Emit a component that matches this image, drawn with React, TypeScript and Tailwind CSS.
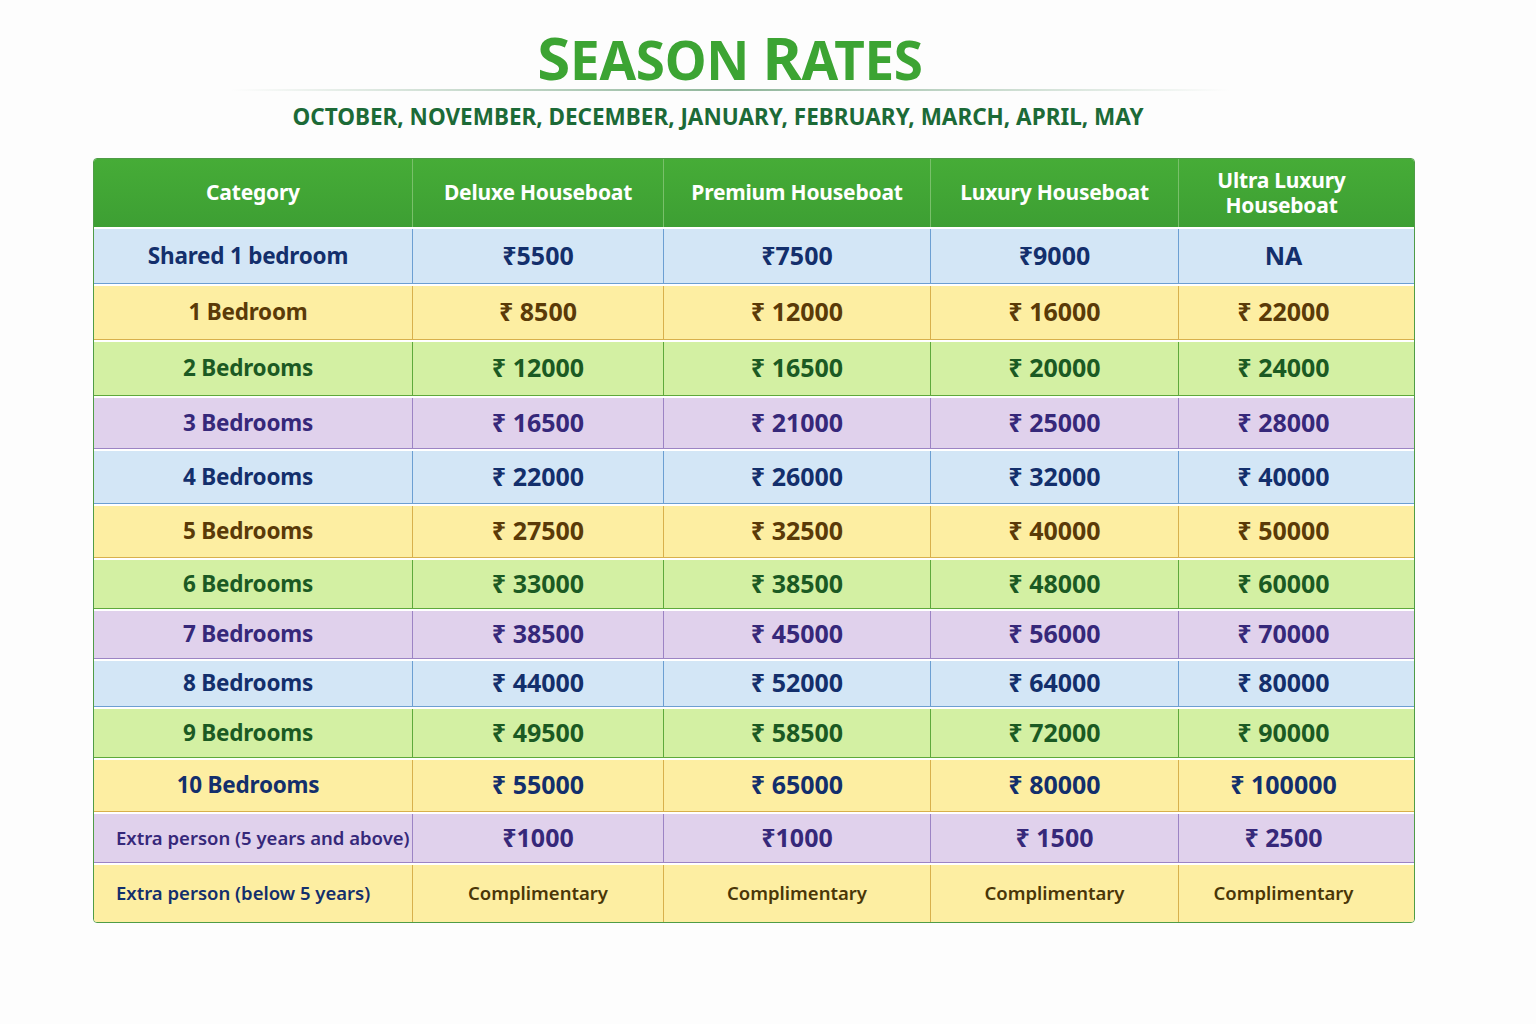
type Tone = "blue" | "yellow" | "green" | "purple";

const tones: Record<Tone, { row: string; cell: string; text: string }> = {
  blue: { row: "bg-[#d3e6f6] border-[#6c9fd2]", cell: "border-[#6c9fd2]", text: "text-[#132f6c]" },
  yellow: { row: "bg-[#fdeea2] border-[#d8b04c]", cell: "border-[#d8b04c]", text: "text-[#5a3a08]" },
  green: { row: "bg-[#d3f0a3] border-[#5ea93b]", cell: "border-[#5ea93b]", text: "text-[#1b5a23]" },
  purple: { row: "bg-[#e0d1ec] border-[#9c84c4]", cell: "border-[#9c84c4]", text: "text-[#36287a]" },
};

const rows: { cat: string; vals: string[]; tone: Tone; h: string; catText?: string }[] = [
  { cat: "Shared 1 bedroom", vals: ["₹5500", "₹7500", "₹9000", "NA"], tone: "blue", h: "h-[55px]" },
  { cat: "1 Bedroom", vals: ["₹ 8500", "₹ 12000", "₹ 16000", "₹ 22000"], tone: "yellow", h: "h-[54px]" },
  { cat: "2 Bedrooms", vals: ["₹ 12000", "₹ 16500", "₹ 20000", "₹ 24000"], tone: "green", h: "h-[54px]" },
  { cat: "3 Bedrooms", vals: ["₹ 16500", "₹ 21000", "₹ 25000", "₹ 28000"], tone: "purple", h: "h-[51px]" },
  { cat: "4 Bedrooms", vals: ["₹ 22000", "₹ 26000", "₹ 32000", "₹ 40000"], tone: "blue", h: "h-[53px]" },
  { cat: "5 Bedrooms", vals: ["₹ 27500", "₹ 32500", "₹ 40000", "₹ 50000"], tone: "yellow", h: "h-[52px]" },
  { cat: "6 Bedrooms", vals: ["₹ 33000", "₹ 38500", "₹ 48000", "₹ 60000"], tone: "green", h: "h-[49px]" },
  { cat: "7 Bedrooms", vals: ["₹ 38500", "₹ 45000", "₹ 56000", "₹ 70000"], tone: "purple", h: "h-[48px]" },
  { cat: "8 Bedrooms", vals: ["₹ 44000", "₹ 52000", "₹ 64000", "₹ 80000"], tone: "blue", h: "h-[46px]" },
  { cat: "9 Bedrooms", vals: ["₹ 49500", "₹ 58500", "₹ 72000", "₹ 90000"], tone: "green", h: "h-[49px]" },
  {
    cat: "10 Bedrooms",
    vals: ["₹ 55000", "₹ 65000", "₹ 80000", "₹ 100000"],
    tone: "yellow",
    h: "h-[52px]",
    catText: "text-[#132f6c]",
  },
];

const cols = "grid grid-cols-[318px_251px_267px_248px_238px]";

export default function App() {
  return (
    <main
      className="min-h-screen w-full bg-[#fdfdfd]"
      style={{ fontFamily: '"Noto Sans", "Open Sans", sans-serif' }}
    >
      <div className="ml-[230px] flex w-[1000px] flex-col items-center pt-[27px]">
        <h1 className="leading-none font-bold tracking-[-0.02em] text-[#3ca433]">
          <span className="text-[60px]">S</span>
          <span className="text-[53px]">EASON </span>
          <span className="text-[60px]">R</span>
          <span className="text-[53px]">ATES</span>
        </h1>
        <div className="mt-[2px] h-[2px] w-full bg-gradient-to-r from-transparent via-[#8fb59a] to-transparent" />
        <p className="mt-[15px] pr-[24px] text-[22.5px] leading-none font-bold text-[#1c6a37]">
          OCTOBER, NOVEMBER, DECEMBER, JANUARY, FEBRUARY, MARCH, APRIL, MAY
        </p>
      </div>

      <div className="mt-[29px] ml-[93px] flex w-[1322px] flex-col gap-[2px] overflow-hidden rounded-[4px] border border-[#4f9c47] bg-white">
        <div className={`${cols} h-[68px] bg-gradient-to-b from-[#46ac37] to-[#3d9f33] text-[21px] leading-[23px] font-bold tracking-[-0.01em] text-white`}>
          <div className="flex items-center justify-center">Category</div>
          <div className="flex items-center justify-center border-l border-[#79c06a]">Deluxe Houseboat</div>
          <div className="flex items-center justify-center border-l border-[#79c06a]">Premium Houseboat</div>
          <div className="flex items-center justify-center border-l border-[#79c06a]">Luxury Houseboat</div>
          <div className="flex flex-col items-center justify-center border-l border-[#79c06a] pr-[32px] text-center leading-[25px]">
            <span>Ultra Luxury</span>
            <span>Houseboat</span>
          </div>
        </div>

        {rows.map((r) => {
          const t = tones[r.tone];
          return (
            <div key={r.cat} className={`${cols} ${r.h} border-b ${t.row} text-[25px] font-bold ${t.text}`}>
              <div className={`flex items-center justify-center pr-[10px] text-[22.5px] tracking-[-0.01em] ${r.catText ?? ""}`}>
                {r.cat}
              </div>
              {r.vals.map((v, i) => (
                <div
                  key={i}
                  className={`flex items-center justify-center border-l ${t.cell} ${i === 3 ? "pr-[28px]" : ""} ${r.catText ?? ""}`}
                >
                  {v}
                </div>
              ))}
            </div>
          );
        })}

        <div className={`${cols} h-[49px] border-b ${tones.purple.row} font-bold ${tones.purple.text}`}>
          <div className="flex items-center pl-[22px] text-[18.5px] font-semibold whitespace-nowrap">
            Extra person (5 years and above)
          </div>
          {["₹1000", "₹1000", "₹ 1500", "₹ 2500"].map((v, i) => (
            <div
              key={i}
              className={`flex items-center justify-center border-l ${tones.purple.cell} text-[25px] ${i === 3 ? "pr-[28px]" : ""}`}
            >
              {v}
            </div>
          ))}
        </div>

        <div className={`${cols} h-[57px] ${tones.yellow.row} font-bold`}>
          <div className="flex items-center pl-[22px] text-[18.5px] font-semibold whitespace-nowrap text-[#132f6c]">
            Extra person (below 5 years)
          </div>
          {["Complimentary", "Complimentary", "Complimentary", "Complimentary"].map((v, i) => (
            <div
              key={i}
              className={`flex items-center justify-center border-l ${tones.yellow.cell} text-[18.5px] font-semibold text-[#4a3607] ${i === 3 ? "pr-[28px]" : ""}`}
            >
              {v}
            </div>
          ))}
        </div>
      </div>
    </main>
  );
}
